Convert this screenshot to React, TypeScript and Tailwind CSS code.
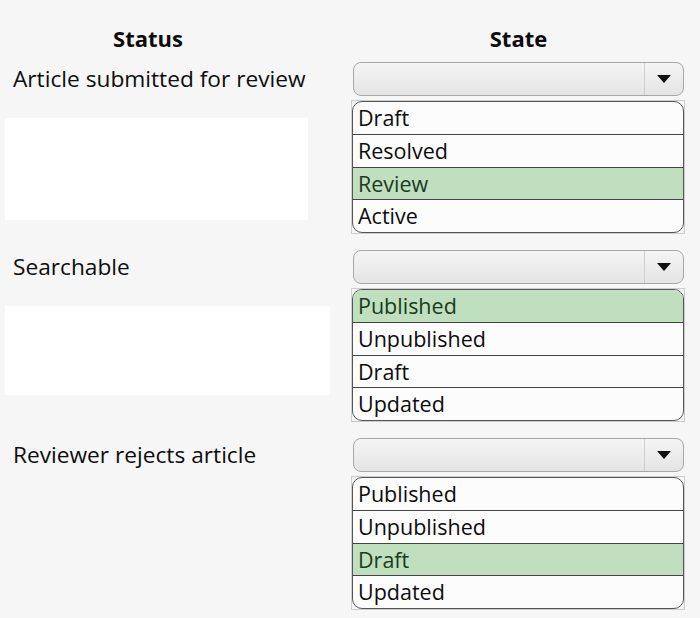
const sections = [
  {
    label: 'Article submitted for review',
    options: ['Draft', 'Resolved', 'Review', 'Active'],
    picked: 'Review',
    blank: 'mt-[22px] h-[102px] w-[303px]',
  },
  {
    label: 'Searchable',
    options: ['Published', 'Unpublished', 'Draft', 'Updated'],
    picked: 'Published',
    blank: 'mt-[22px] h-[89px] w-[325px]',
  },
  {
    label: 'Reviewer rejects article',
    options: ['Published', 'Unpublished', 'Draft', 'Updated'],
    picked: 'Draft',
    blank: '',
  },
];

function Dropdown() {
  return (
    <div className="flex h-[34px] w-[331px] rounded-[8px] border border-[#a8a8a8] bg-gradient-to-b from-[#f4f4f4] to-[#e4e4e4]">
      <div className="flex-1" />
      <div className="flex w-[39px] items-center justify-center border-l border-[#cfcfcf]">
        <svg width="16" height="10" viewBox="0 0 16 10">
          <path d="M1 1h14L8 9z" fill="#111" />
        </svg>
      </div>
    </div>
  );
}

function OptionList({ options, picked }: { options: string[]; picked: string }) {
  return (
    <div className="w-[334px] -ml-[2px] border border-[#cdcdcd]">
      <div className="flex h-[132px] flex-col divide-y divide-[#444] overflow-hidden rounded-[10px] border border-[#555] bg-[#fcfcfc]">
        {options.map(o => (
          <div
            key={o}
            className={`flex flex-1 items-center pl-[5px] text-[21.5px] leading-none ${
              o === picked ? 'bg-[#bfdfbf] text-[#1c3a1c]' : 'text-[#0d0d0d]'
            }`}
          >
            {o}
          </div>
        ))}
      </div>
    </div>
  );
}

export default function App() {
  return (
    <div
      className="h-[618px] w-[700px] bg-[#f6f6f6] text-[#0d0d0d]"
      style={{ fontFamily: '"Open Sans", "Noto Sans", sans-serif' }}
    >
      <div className="flex pt-[24px]">
        <div className="flex h-[28px] w-[296px] items-center justify-center text-[22px] font-bold">Status</div>
        <div className="ml-[57px] flex h-[28px] w-[331px] items-center justify-center text-[22px] font-bold">State</div>
      </div>

      <div className="mt-[10px] flex flex-col gap-[16px]">
        {sections.map(s => (
          <div key={s.label} className="grid grid-cols-[353px_331px]">
            <div className="pl-[5px]">
              <div className="flex h-[34px] items-center pl-[8px] text-[22.7px]">{s.label}</div>
              {s.blank && <div className={`bg-white ${s.blank}`} />}
            </div>
            <div>
              <Dropdown />
              <div className="mt-[4px]">
                <OptionList options={s.options} picked={s.picked} />
              </div>
            </div>
          </div>
        ))}
      </div>
    </div>
  );
}
